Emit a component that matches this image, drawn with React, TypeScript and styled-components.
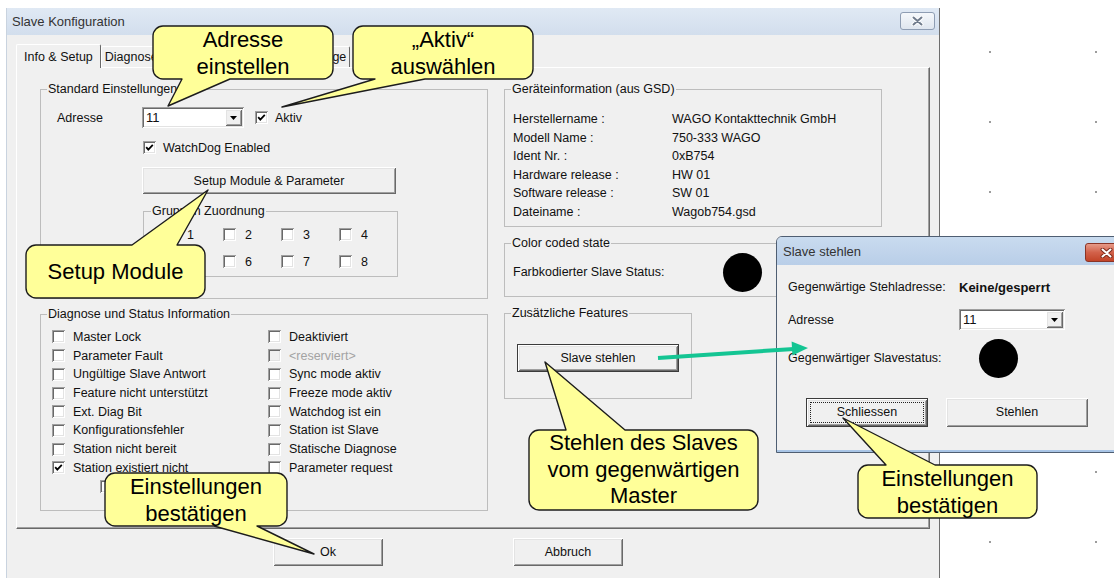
import React from "react";
import styled, { createGlobalStyle } from "styled-components";

const ui = `"Liberation Sans", Arial, sans-serif`;

const GlobalStyle = createGlobalStyle`
  html, body {
    margin: 0;
    padding: 0;
    background: #fff;
  }
  body {
    font-family: ${ui};
  }
`;

const raised = `
  box-shadow: inset 1px 1px #fff, inset -1px -1px #696969, inset 2px 2px #e3e3e3,
    inset -2px -2px #a0a0a0;
`;
const sunken = `
  box-shadow: inset 1px 1px #a0a0a0, inset -1px -1px #fff, inset 2px 2px #696969,
    inset -2px -2px #e3e3e3;
`;

const Page = styled.div`
  position: relative;
  display: flex;
  width: 1114px;
  height: 578px;
  overflow: hidden;
  background: #fff;
  font-family: ${ui};
  font-size: 12.5px;
  color: #111;
`;

const Desk = styled.div`
  flex: 1;
  background-image: radial-gradient(circle, #9c9c9c 0.8px, transparent 1.4px);
  background-size: 106px 70px;
  background-position: -3px 17px;
`;

/* ---------- main window ---------- */

const Window = styled.div`
  display: flex;
  flex-direction: column;
  box-sizing: border-box;
  width: 934px;
  height: 570px;
  margin: 8px 0 0 6px;
  border-left: 1px solid #c9d3df;
  border-right: 1px solid #6e6e6e;
  background: #f0f0f0;
`;

const TitleBar = styled.div<{ $active?: boolean }>`
  display: flex;
  align-items: center;
  flex: none;
  height: ${(p) => (p.$active ? 28 : 27)}px;
  padding-left: ${(p) => (p.$active ? 6 : 5)}px;
  background: ${(p) =>
    p.$active
      ? "linear-gradient(180deg, #c9dbef 0%, #b9cee8 100%)"
      : "linear-gradient(180deg, #e0e9f4 0%, #d2deed 100%)"};
`;

const TitleText = styled.span`
  flex: 1;
  font-size: 13px;
  color: #333;
  white-space: nowrap;
`;

const CaptionClose = styled.div<{ $red?: boolean }>`
  display: flex;
  align-items: center;
  justify-content: center;
  align-self: flex-start;
  box-sizing: border-box;
  width: ${(p) => (p.$red ? 43 : 35)}px;
  height: ${(p) => (p.$red ? 19 : 18)}px;
  margin: ${(p) => (p.$red ? "6px 5px 0 0" : "4px 4px 0 0")};
  border: 1px solid ${(p) => (p.$red ? "#8a3426" : "#8e9db3")};
  border-radius: 3px;
  background: ${(p) =>
    p.$red
      ? "linear-gradient(180deg, #e69a88 0%, #d2614a 50%, #c24428 100%)"
      : "linear-gradient(180deg, #f5f8fb 0%, #dfe6ef 100%)"};
`;

const WindowBody = styled.div`
  display: flex;
  flex-direction: column;
  padding: 9px 0 0 9px;
`;

const TabStrip = styled.div`
  position: relative;
  z-index: 2;
  display: flex;
  align-items: flex-end;
  height: 23px;
`;

const Tab = styled.div<{ $active?: boolean }>`
  display: flex;
  align-items: center;
  box-sizing: border-box;
  height: ${(p) => (p.$active ? 24 : 21)}px;
  margin-bottom: ${(p) => (p.$active ? -1 : 0)}px;
  padding: 0 ${(p) => (p.$active ? 7 : 3)}px;
  background: #f0f0f0;
  border-top: 1px solid #fff;
  border-left: 1px solid #fff;
  border-right: 1px solid #696969;
  border-radius: 2px 2px 0 0;
  white-space: nowrap;
`;

const TabPanel = styled.div`
  position: relative;
  z-index: 1;
  display: flex;
  gap: 16px;
  box-sizing: border-box;
  width: 914px;
  height: 462px;
  padding: 14px 0 0 23px;
  border-top: 1px solid #fff;
  border-left: 1px solid #fff;
  border-right: 1px solid #696969;
  border-bottom: 1px solid #696969;
  box-shadow: inset -1px -1px #a0a0a0;
`;

const Column = styled.div<{ $w: number }>`
  display: flex;
  flex-direction: column;
  align-items: flex-start;
  width: ${(p) => p.$w}px;
`;

const Footer = styled.div`
  display: flex;
  gap: 130px;
  margin-top: 9px;
  padding-left: 257px;
`;

/* ---------- group boxes ---------- */

const GroupBox = styled.fieldset<{ $w?: number; $h: number; $mt?: number; $ml?: number }>`
  box-sizing: border-box;
  width: ${(p) => (p.$w ? `${p.$w}px` : "100%")};
  height: ${(p) => p.$h}px;
  min-width: 0;
  margin: ${(p) => p.$mt ?? 0}px 0 0 ${(p) => p.$ml ?? 0}px;
  padding: 0;
  border: 1px solid #bdbdbd;
`;

const Legend = styled.legend<{ $ml?: number }>`
  margin-left: ${(p) => p.$ml ?? 6}px;
  padding: 0 1px;
  line-height: 14px;
  font-size: 12.5px;
  white-space: nowrap;
`;

const GroupBody = styled.div<{ $pt: number; $pl: number }>`
  display: flex;
  flex-direction: column;
  align-items: flex-start;
  padding: ${(p) => p.$pt}px 0 0 ${(p) => p.$pl}px;
`;

const FieldRow = styled.div<{ $h: number; $mt?: number; $ml?: number }>`
  display: flex;
  align-items: center;
  height: ${(p) => p.$h}px;
  margin: ${(p) => p.$mt ?? 0}px 0 0 ${(p) => p.$ml ?? 0}px;
  white-space: nowrap;
`;

const FieldLabel = styled.span<{ $w: number }>`
  flex: none;
  width: ${(p) => p.$w}px;
`;

const Value = styled.span<{ $bold?: boolean }>`
  font-weight: ${(p) => (p.$bold ? 700 : 400)};
  font-size: ${(p) => (p.$bold ? 13 : 12.5)}px;
`;

const StatusLamp = styled.span`
  flex: none;
  width: 39px;
  height: 39px;
  border-radius: 50%;
  background: #000;
`;

/* ---------- controls ---------- */

const CheckItem = styled.label<{ $gap: number; $ml?: number; $disabled?: boolean }>`
  display: flex;
  align-items: center;
  gap: ${(p) => p.$gap}px;
  margin-left: ${(p) => p.$ml ?? 0}px;
  white-space: nowrap;
  color: ${(p) => (p.$disabled ? "#a3a3a3" : "#111")};
`;

const Box = styled.span<{ $disabled?: boolean }>`
  position: relative;
  flex: none;
  display: block;
  width: 13px;
  height: 13px;
  background: ${(p) => (p.$disabled ? "#f0f0f0" : "#fff")};
  ${sunken}
`;

const Tick = styled.svg`
  position: absolute;
  left: 0;
  top: 0;
`;

const CheckBox = ({ checked, disabled }: { checked?: boolean; disabled?: boolean }) => (
  <Box $disabled={disabled}>
    {checked && (
      <Tick width="13" height="13" viewBox="0 0 13 13">
        <polyline points="3.2,6.2 5.3,8.6 9.8,3.9" fill="none" stroke="#000" strokeWidth="1.8" />
      </Tick>
    )}
  </Box>
);

const Combo = styled.div<{ $w: number }>`
  display: flex;
  align-items: center;
  flex: none;
  box-sizing: border-box;
  width: ${(p) => p.$w}px;
  height: 21px;
  padding: 2px;
  background: #fff;
  ${sunken}
`;

const ComboText = styled.span`
  flex: 1;
  padding-left: 2px;
  font-size: 13px;
`;

const DropButton = styled.span`
  display: flex;
  align-items: center;
  justify-content: center;
  width: 17px;
  height: 17px;
  background: #f0f0f0;
  ${raised}
`;

const ComboBox = ({ width, value }: { width: number; value: string }) => (
  <Combo $w={width}>
    <ComboText>{value}</ComboText>
    <DropButton>
      <svg width="7" height="4" viewBox="0 0 7 4">
        <path d="M0 0 H7 L3.5 4 Z" fill="#000" />
      </svg>
    </DropButton>
  </Combo>
);

const Button = styled.button<{ $w: number; $h?: number; $default?: boolean; $focus?: boolean; $mt?: number; $ml?: number }>`
  position: relative;
  display: flex;
  align-items: center;
  justify-content: center;
  flex: none;
  box-sizing: border-box;
  width: ${(p) => p.$w}px;
  height: ${(p) => p.$h ?? 28}px;
  margin: ${(p) => p.$mt ?? 0}px 0 0 ${(p) => p.$ml ?? 0}px;
  padding: 0;
  appearance: none;
  border: ${(p) => (p.$default ? "1px solid #3b3b3b" : "none")};
  background: #f0f0f0;
  font-family: ${ui};
  font-size: 12.5px;
  color: #111;
  ${raised}
  &::after {
    content: "";
    display: ${(p) => (p.$focus ? "block" : "none")};
    position: absolute;
    inset: 3px;
    border: 1px dotted #222;
  }
`;

/* ---------- layout pieces ---------- */

const GroupGrid = styled.div`
  display: grid;
  grid-template-columns: repeat(4, 58px);
  grid-template-rows: 15px 15px;
  row-gap: 12px;
  align-items: center;
`;

const DiagGrid = styled.div`
  display: grid;
  grid-template-columns: 216px 216px;
  grid-template-rows: repeat(8, 18.7px);
  grid-auto-flow: column;
  align-items: center;
`;

const InfoRow = styled.div`
  display: flex;
  align-items: center;
  height: 18.6px;
  white-space: nowrap;
`;

/* ---------- steal dialog ---------- */

const Dialog = styled.div`
  position: absolute;
  left: 776px;
  top: 236px;
  z-index: 5;
  display: flex;
  flex-direction: column;
  box-sizing: border-box;
  width: 358px;
  height: 217px;
  border: 1px solid #4f5e72;
  border-radius: 6px 0 0 0;
  overflow: hidden;
  background: #f0f0f0;
  box-shadow: inset 0 -2px 0 #a9c5e6;
`;

const DialogBody = styled.div`
  display: flex;
  flex-direction: column;
  align-items: flex-start;
  padding: 13px 0 0 11px;
`;

const ButtonRow = styled.div`
  display: flex;
  gap: 18px;
  margin: 20px 0 0 18px;
`;

/* ---------- annotations ---------- */

type TailSpec = { side: "top" | "bottom"; b1: number; b2: number; tx: number; ty: number };

const bubblePath = (w: number, h: number, t: TailSpec) => {
  const r = 10;
  const top = t.side === "top" ? ` L${t.b1} 0 L${t.tx} ${t.ty} L${t.b2} 0` : "";
  const bottom = t.side === "bottom" ? ` L${t.b2} ${h} L${t.tx} ${t.ty} L${t.b1} ${h}` : "";
  return (
    `M${r} 0${top} L${w - r} 0 A${r} ${r} 0 0 1 ${w} ${r} L${w} ${h - r} ` +
    `A${r} ${r} 0 0 1 ${w - r} ${h}${bottom} L${r} ${h} A${r} ${r} 0 0 1 0 ${h - r} ` +
    `L0 ${r} A${r} ${r} 0 0 1 ${r} 0 Z`
  );
};

const CalloutBox = styled.div<{ $x: number; $y: number; $w: number; $h: number; $lh: number }>`
  position: absolute;
  left: ${(p) => p.$x}px;
  top: ${(p) => p.$y}px;
  z-index: 10;
  display: flex;
  flex-direction: column;
  align-items: center;
  justify-content: center;
  width: ${(p) => p.$w}px;
  height: ${(p) => p.$h}px;
  font-family: ${ui};
  font-size: 22px;
  line-height: ${(p) => p.$lh}px;
  color: #000;
`;

const CalloutShape = styled.svg`
  position: absolute;
  left: 0;
  top: 0;
  overflow: visible;
`;

const CalloutLine = styled.span`
  position: relative;
  white-space: nowrap;
`;

type CalloutProps = { x: number; y: number; w: number; h: number; tail: TailSpec; lines: string[]; lh?: number };

const Callout = ({ x, y, w, h, tail, lines, lh = 27 }: CalloutProps) => (
  <CalloutBox $x={x} $y={y} $w={w} $h={h} $lh={lh}>
    <CalloutShape width={w} height={h}>
      <path d={bubblePath(w, h, tail)} fill="#ffff99" stroke="#1c1c1c" strokeWidth="1.4" strokeLinejoin="round" />
    </CalloutShape>
    {lines.map((l) => (
      <CalloutLine key={l}>{l}</CalloutLine>
    ))}
  </CalloutBox>
);

const ArrowLayer = styled.svg`
  position: absolute;
  left: 650px;
  top: 335px;
  z-index: 8;
  overflow: visible;
`;

/* ---------- data ---------- */

const leftDiag = [
  "Master Lock",
  "Parameter Fault",
  "Ungültige Slave Antwort",
  "Feature nicht unterstützt",
  "Ext. Diag Bit",
  "Konfigurationsfehler",
  "Station nicht bereit",
  "Station existiert nicht",
];
const rightDiag = [
  "Deaktiviert",
  "<reserviert>",
  "Sync mode aktiv",
  "Freeze mode aktiv",
  "Watchdog ist ein",
  "Station ist Slave",
  "Statische Diagnose",
  "Parameter request",
];
const deviceInfo = [
  ["Herstellername :", "WAGO Kontakttechnik GmbH"],
  ["Modell Name :", "750-333 WAGO"],
  ["Ident Nr. :", "0xB754"],
  ["Hardware release :", "HW 01"],
  ["Software release :", "SW 01"],
  ["Dateiname :", "Wagob754.gsd"],
];

const CloseGlyph = ({ fg, halo }: { fg: string; halo: string }) => (
  <svg width="13" height="10" viewBox="0 0 13 10">
    <path d="M2.5 1.5 L10.5 8.5 M10.5 1.5 L2.5 8.5" stroke={halo} strokeWidth="4" strokeLinecap="round" />
    <path d="M2.5 1.5 L10.5 8.5 M10.5 1.5 L2.5 8.5" stroke={fg} strokeWidth="2" strokeLinecap="round" />
  </svg>
);

export default function App() {
  return (
    <>
      <GlobalStyle />
      <Page>
        <Window>
          <TitleBar>
            <TitleText>Slave Konfiguration</TitleText>
            <CaptionClose>
              <CloseGlyph fg="#6f7b8c" halo="#ffffff" />
            </CaptionClose>
          </TitleBar>
          <WindowBody>
            <TabStrip>
              <Tab $active>Info &amp; Setup</Tab>
              <Tab>Diagnose</Tab>
              <Tab>Konfiguration der Ein-/Ausgänge</Tab>
            </TabStrip>
            <TabPanel>
              <Column $w={448}>
                <GroupBox $h={217}>
                  <Legend>Standard Einstellungen</Legend>
                  <GroupBody $pt={11} $pl={16}>
                    <FieldRow $h={21}>
                      <FieldLabel $w={85}>Adresse</FieldLabel>
                      <ComboBox width={102} value="11" />
                      <CheckItem $gap={7} $ml={11}>
                        <CheckBox checked />
                        Aktiv
                      </CheckItem>
                    </FieldRow>
                    <FieldRow $h={15} $mt={12} $ml={86}>
                      <CheckItem $gap={7}>
                        <CheckBox checked />
                        WatchDog Enabled
                      </CheckItem>
                    </FieldRow>
                    <Button $w={254} $h={27} $mt={12} $ml={85}>
                      Setup Module &amp; Parameter
                    </Button>
                    <GroupBox $w={255} $h={73} $mt={10} $ml={86}>
                      <Legend $ml={7}>Gruppen Zuordnung</Legend>
                      <GroupBody $pt={9} $pl={21}>
                        <GroupGrid>
                          {[1, 2, 3, 4, 5, 6, 7, 8].map((n) => (
                            <CheckItem key={n} $gap={9}>
                              <CheckBox />
                              {n}
                            </CheckItem>
                          ))}
                        </GroupGrid>
                      </GroupBody>
                    </GroupBox>
                  </GroupBody>
                </GroupBox>
                <GroupBox $h={204} $mt={8}>
                  <Legend>Diagnose und Status Information</Legend>
                  <GroupBody $pt={6.6} $pl={11}>
                    <DiagGrid>
                      {leftDiag.map((t) => (
                        <CheckItem key={t} $gap={8}>
                          <CheckBox checked={t === "Station existiert nicht"} />
                          {t}
                        </CheckItem>
                      ))}
                      {rightDiag.map((t) => (
                        <CheckItem key={t} $gap={8} $disabled={t === "<reserviert>"}>
                          <CheckBox disabled={t === "<reserviert>"} />
                          {t}
                        </CheckItem>
                      ))}
                    </DiagGrid>
                    <FieldRow $h={18.7} $ml={48}>
                      <CheckBox />
                    </FieldRow>
                  </GroupBody>
                </GroupBox>
              </Column>
              <Column $w={378}>
                <GroupBox $h={145}>
                  <Legend>Geräteinformation (aus GSD)</Legend>
                  <GroupBody $pt={13.7} $pl={8}>
                    {deviceInfo.map(([k, v]) => (
                      <InfoRow key={k}>
                        <FieldLabel $w={159}>{k}</FieldLabel>
                        <Value>{v}</Value>
                      </InfoRow>
                    ))}
                  </GroupBody>
                </GroupBox>
                <GroupBox $h={61} $mt={9}>
                  <Legend>Color coded state</Legend>
                  <GroupBody $pt={2.5} $pl={8}>
                    <FieldRow $h={39}>
                      <FieldLabel $w={210}>Farbkodierter Slave Status:</FieldLabel>
                      <StatusLamp />
                    </FieldRow>
                  </GroupBody>
                </GroupBox>
                <GroupBox $w={188} $h={93} $mt={9}>
                  <Legend>Zusätzliche Features</Legend>
                  <GroupBody $pt={24} $pl={12}>
                    <Button $w={162} $h={28} $default>
                      Slave stehlen
                    </Button>
                  </GroupBody>
                </GroupBox>
              </Column>
            </TabPanel>
            <Footer>
              <Button $w={110}>Ok</Button>
              <Button $w={110}>Abbruch</Button>
            </Footer>
          </WindowBody>
        </Window>
        <Desk />

        <Dialog>
          <TitleBar $active>
            <TitleText>Slave stehlen</TitleText>
            <CaptionClose $red>
              <CloseGlyph fg="#ffffff" halo="#7b2a1b" />
            </CaptionClose>
          </TitleBar>
          <DialogBody>
            <FieldRow $h={18}>
              <FieldLabel $w={171}>Gegenwärtige Stehladresse:</FieldLabel>
              <Value $bold>Keine/gesperrt</Value>
            </FieldRow>
            <FieldRow $h={21} $mt={13}>
              <FieldLabel $w={171}>Adresse</FieldLabel>
              <ComboBox width={106} value="11" />
            </FieldRow>
            <FieldRow $h={39} $mt={8.5}>
              <FieldLabel $w={190.5}>Gegenwärtiger Slavestatus:</FieldLabel>
              <StatusLamp />
            </FieldRow>
            <ButtonRow>
              <Button $w={122} $h={29} $default $focus>
                Schliessen
              </Button>
              <Button $w={142} $h={29}>
                Stehlen
              </Button>
            </ButtonRow>
          </DialogBody>
        </Dialog>

        <ArrowLayer width="165" height="30">
          <line x1="8" y1="23" x2="144" y2="14" stroke="#14c593" strokeWidth="4" />
          <polygon points="158,13 142.4,20.5 141.6,6.5" fill="#14c593" />
        </ArrowLayer>

        <Callout x={153} y={26} w={180} h={53} tail={{ side: "bottom", b1: 29, b2: 77, tx: 15, ty: 80 }} lines={["Adresse", "einstellen"]} />
        <Callout x={353} y={26} w={180} h={53} tail={{ side: "bottom", b1: 22, b2: 72, tx: -71, ty: 81 }} lines={["„Aktiv“", "auswählen"]} />
        <Callout x={26} y={245} w={179} h={53} tail={{ side: "top", b1: 106, b2: 151, tx: 182, ty: -55 }} lines={["Setup Module"]} />
        <Callout x={105} y={473} w={182} h={53} tail={{ side: "bottom", b1: 109, b2: 152, tx: 209, ty: 81 }} lines={["Einstellungen", "bestätigen"]} />
        <Callout
          x={529}
          y={430}
          w={229}
          h={80}
          lh={26.5}
          tail={{ side: "top", b1: 37, b2: 96, tx: 16, ty: -68 }}
          lines={["Stehlen des Slaves", "vom gegenwärtigen", "Master"]}
        />
        <Callout x={858} y={465} w={179} h={53} tail={{ side: "top", b1: 28, b2: 77, tx: -15, ty: -47 }} lines={["Einstellungen", "bestätigen"]} />
      </Page>
    </>
  );
}
